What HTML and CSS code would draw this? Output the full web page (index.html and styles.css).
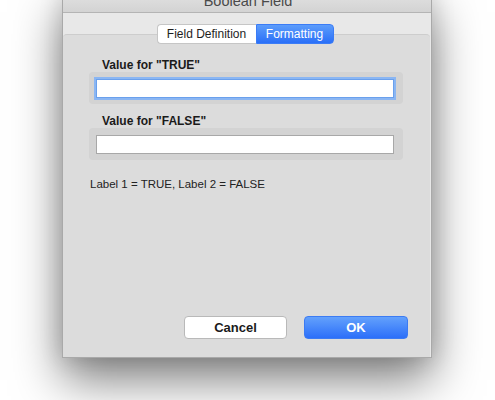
FILE: index.html
```html
<!DOCTYPE html>
<html>
<head>
<meta charset="utf-8">
<link rel="stylesheet" href="styles.css">
</head>
<body>
<div class="window">
  <div class="titlebar">Boolean Field</div>
  <div class="content">
    <div class="tabs">
      <span class="tab">Field Definition</span><span class="tab active">Formatting</span>
    </div>
    <div class="groupbox">
      <div class="label">Value for "TRUE"</div>
      <div class="field">
        <div class="input focused"></div>
      </div>
      <div class="label second">Value for "FALSE"</div>
      <div class="field">
        <div class="input"></div>
      </div>
      <div class="note">Label 1 = TRUE, Label 2 = FALSE</div>
      <div class="buttons">
        <button class="btn cancel">Cancel</button>
        <button class="btn ok">OK</button>
      </div>
    </div>
  </div>
</div>
</body>
</html>
```

FILE: styles.css
```css
html, body {
  margin: 0;
  padding: 0;
  background: #ffffff;
  overflow: hidden;
}
body {
  font-family: "Liberation Sans", Arial, sans-serif;
  height: 400px;
}
.window {
  margin: -10px 0 0 62px;
  width: 370px;
  height: 368px;
  box-sizing: border-box;
  border: 1px solid #a9a9a9;
  border-top: none;
  background: #e8e8e8;
  display: flex;
  flex-direction: column;
  box-shadow: 0 22px 45px rgba(0, 0, 0, 0.5), 0 0 22px rgba(0, 0, 0, 0.14);
}
.titlebar {
  height: 22px;
  line-height: 22px;
  text-align: center;
  font-size: 14.5px;
  color: #4a4a4a;
  background: linear-gradient(#e4e4e4, #d3d3d3);
  border-bottom: 1px solid #b4b4b4;
  padding-left: 2px;
}
.content {
  flex: 1;
  display: flex;
  flex-direction: column;
  padding: 0 1px 0 0;
}
.tabs {
  display: flex;
  justify-content: center;
  margin-top: 11px;
  margin-bottom: -10px;
  padding-right: 3px;
  position: relative;
  z-index: 1;
}
.tab {
  display: inline-block;
  height: 20px;
  box-sizing: border-box;
  line-height: 18px;
  font-size: 12px;
  color: #1e1e1e;
  background: #ffffff;
  border: 1px solid #c6c6c6;
  border-right: none;
  border-radius: 4px 0 0 4px;
  width: 99px;
  text-align: center;
}
.tab.active {
  width: 78px;
  color: #ffffff;
  background: linear-gradient(#5c9cfb, #2a6ff8);
  border: 1px solid #3b7cf6;
  border-radius: 0 4px 4px 0;
}
.groupbox {
  flex: 1;
  background: #dcdcdc;
  border-top: 1px solid #cdcdcd;
  border-radius: 4px 4px 0 0;
  padding: 23px 0 0 26px;
  display: flex;
  flex-direction: column;
}
.label {
  font-size: 12px;
  font-weight: bold;
  line-height: 14px;
  color: #1a1a1a;
  margin-left: 13px;
}
.label.second {
  margin-top: 10px;
}
.field {
  width: 314px;
  box-sizing: border-box;
  background: #d3d3d3;
  border-radius: 4px;
  padding: 7px 0 6px 7px;
}
.input {
  width: 298px;
  height: 19px;
  box-sizing: border-box;
  background: #ffffff;
  border: 1px solid #a8a8a8;
}
.input.focused {
  border: 1px solid #6aa0ec;
  box-shadow: 0 0 0 2px #8ab6f3;
}
.note {
  margin-top: 17px;
  font-size: 11.5px;
  line-height: 14px;
  color: #222222;
  margin-left: 1px;
}
.buttons {
  margin-top: auto;
  margin-bottom: 18px;
  display: flex;
  justify-content: flex-end;
  gap: 17px;
  padding-right: 22px;
}
.btn {
  font-family: "Liberation Sans", Arial, sans-serif;
  font-size: 13px;
  font-weight: bold;
  height: 23px;
  border-radius: 4px;
  padding: 0;
  box-sizing: border-box;
}
.btn.cancel {
  width: 103px;
  background: #ffffff;
  color: #1a1a1a;
  border: 1px solid #b9b9b9;
}
.btn.ok {
  width: 104px;
  color: #ffffff;
  background: linear-gradient(#63a1fc, #2c6ff9);
  border: 1px solid #3c7bf3;
}
```
